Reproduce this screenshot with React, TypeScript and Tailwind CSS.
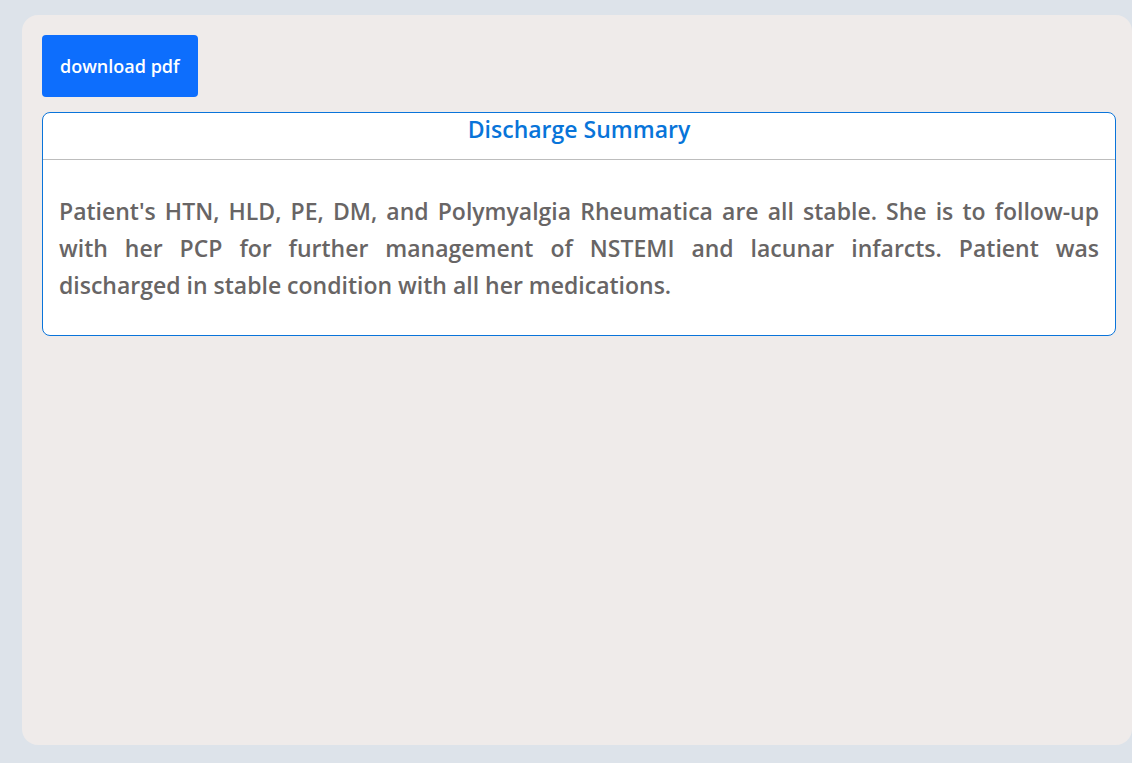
import React from "react";

export default function App() {
  const line = "block text-justify [text-align-last:justify]";
  return (
    <div
      className="min-h-[763px] w-full bg-[#dde3ea] pl-[22px] pt-[15px] pb-[18px]"
      style={{ fontFamily: '"Open Sans", "Noto Sans", sans-serif' }}
    >
      <div className="h-[730px] w-full rounded-l-[16px] rounded-r-[16px] bg-[#efebea] pl-[20px] pr-[16px] pt-[20px]">
        <button className="h-[62px] rounded-[4px] bg-[#0d6efd] px-[18px] text-[18px] font-semibold text-white">
          download pdf
        </button>
        <div className="mt-[15px] overflow-hidden rounded-[8px] border border-[#0a74da] bg-white">
          <div className="h-[47px] border-b border-[#bdbdbd] text-center text-[23px] font-semibold leading-[32px] text-[#0874d9]">
            Discharge Summary
          </div>
          <div className="px-[16px] pt-[33px] pb-[31px]">
            <p className="text-[23px] font-semibold leading-[37px] text-[#686565]">
              <span className={line}>
                Patient's HTN, HLD, PE, DM, and Polymyalgia Rheumatica are all stable. She is to follow-up
              </span>
              <span className={line}>
                with her PCP for further management of NSTEMI and lacunar infarcts. Patient was
              </span>
              <span className="block text-left">
                discharged in stable condition with all her medications.
              </span>
            </p>
          </div>
        </div>
      </div>
    </div>
  );
}
